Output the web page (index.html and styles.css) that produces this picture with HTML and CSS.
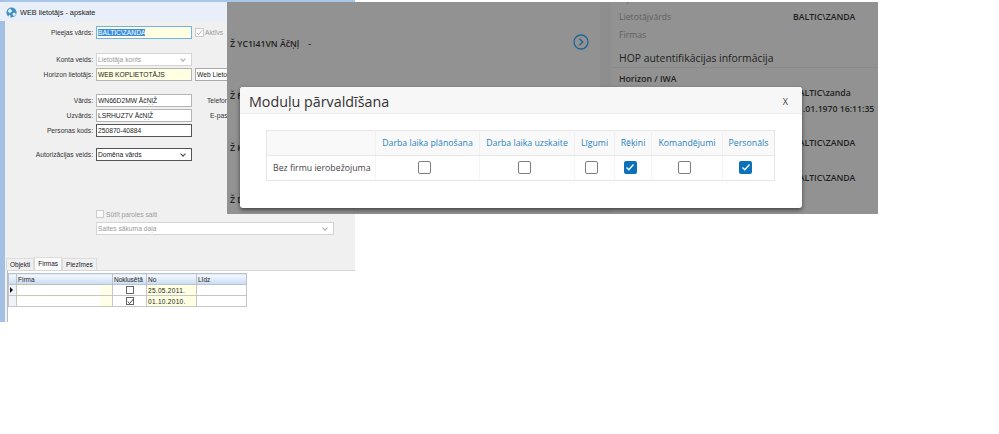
FILE: index.html
```html
<!DOCTYPE html>
<html lang="lv">
<head>
<meta charset="utf-8">
<title>Moduļu pārvaldīšana</title>
<link rel="stylesheet" href="styles.css">
</head>
<body>
<div class="canvas">
  <section class="legacy">
    <header class="legacy-title">
      <svg class="globe" width="11" height="11" viewBox="0 0 14 14"><circle cx="7" cy="7" r="6.500" fill="#3f8fc4"/><path d="M2 5l3-3 3 3-3 3zM8 9l2-2 3 2-3 3zM4 10l2 1-1 2-2-1z" fill="#e8f2f8"/></svg>
      <span>WEB lietotājs - apskate</span>
    </header>
    <div class="form">
      <div class="row r-login"><label>Pieejas vārds:</label><div class="field wide yellow focus"><mark>BALTIC\ZANDA</mark></div><span class="check-mini on"><svg width="8" height="8" viewBox="0 0 8 8"><path d="M1 4l2 2 4-5" fill="none" stroke="#b5b5b5" stroke-width="1.100"/></svg></span><span class="muted">Aktīvs</span></div>
      <div class="row r-type"><label>Konta veids:</label><div class="field wide disabled">Lietotāja konts<i class="chev"></i></div></div>
      <div class="row r-horizon"><label>Horizon lietotājs:</label><div class="field wide yellow">WEB KOPLIETOTĀJS</div><div class="field webuser">Web Lietotājs</div></div>
      <div class="row r-name"><label>Vārds:</label><div class="field wide">WN66D2MW ĀčŅļŽ</div><span class="side">Telefons:</span></div>
      <div class="row r-next"><label>Uzvārds:</label><div class="field wide">LSRHUZ7V ĀčŅļŽ</div><span class="side side-mail">E-pasts:</span></div>
      <div class="row r-next"><label>Personas kods:</label><div class="field wide dark">250870-40884</div></div>
      <div class="row r-auth"><label>Autorizācijas veids:</label><div class="field wide dark">Domēna vārds<i class="chev dark-chev"></i></div></div>
      <div class="row r-send"><span class="check-mini"></span><span class="muted">Sūtīt paroles saiti</span></div>
      <div class="row r-site"><div class="field long disabled">Saites sākuma daļa<i class="chev"></i></div></div>
    </div>
    <nav class="tabs"><span class="tab">Objekti</span><span class="tab active">Firmas</span><span class="tab">Piezīmes</span></nav>
    <div class="gridbox">
      <table class="grid">
        <thead><tr><th class="ind"></th><th class="c-firm">Firma</th><th class="c-def">Noklusētā</th><th class="c-from">No</th><th class="c-to">Līdz</th></tr></thead>
        <tbody>
          <tr><td class="ind"><i class="pointer"></i></td><td class="firm"><b class="redact"></b></td><td class="center"><span class="grid-check"></span></td><td class="date">25.05.2011.</td><td></td></tr>
          <tr><td class="ind"></td><td class="firm"><b class="redact"></b></td><td class="center"><span class="grid-check"><svg width="9" height="9" viewBox="0 0 11 11"><path d="M2 5.500l2.500 2.500L9 2.500" fill="none" stroke="#444" stroke-width="1.200"/></svg></span></td><td class="date">01.10.2010.</td><td></td></tr>
        </tbody>
      </table>
    </div>
  </section>

  <section class="portal">
    <div class="portal-left">
      <div class="entry first"><span class="entry-name">Ž YC1I41VN ĀčŅļ</span><span class="dash">-</span>
        <svg class="next" width="16" height="16" viewBox="0 0 16 16"><circle cx="8" cy="8" r="7" fill="none" stroke="#1f6796" stroke-width="1.300"/><path d="M6.500 4.800L9.700 8l-3.200 3.200" fill="none" stroke="#1f6796" stroke-width="1.500"/></svg>
      </div>
      <div class="entry"><span class="entry-name">Ž F</span></div>
      <div class="entry"><span class="entry-name">Ž K</span></div>
      <div class="entry"><span class="entry-name">Ž D</span></div>
    </div>
    <div class="portal-right">
      <div class="info clipped"><span class="info-label">E-pasts</span></div>
      <div class="info"><span class="info-label">Lietotājvārds</span><strong>BALTIC\ZANDA</strong></div>
      <div class="info"><span class="info-label">Firmas</span></div>
      <h2>HOP autentifikācijas informācija</h2>
      <h3>Horizon / IWA</h3>
      <div class="info tight"><span class="info-label"></span><strong>BALTIC\zanda</strong></div>
      <div class="info tight"><span class="info-label"></span><strong>01.01.1970 16:11:35</strong></div>
      <div class="info tight gap1"><span class="info-label"></span><strong>BALTIC\ZANDA</strong></div>
      <div class="info tight gap2"><span class="info-label"></span><strong>BALTIC\ZANDA</strong></div>
    </div>
  </section>

  <section class="modal">
    <header class="modal-head"><h1>Moduļu pārvaldīšana</h1><span class="close">X</span></header>
    <div class="modal-body">
      <table class="modules">
        <thead><tr><th class="m0"></th><th class="m1">Darba laika plānošana</th><th class="m2">Darba laika uzskaite</th><th class="m3">Līgumi</th><th class="m4">Rēķini</th><th class="m5">Komandējumi</th><th class="m6">Personāls</th></tr></thead>
        <tbody><tr>
          <td class="rowname">Bez firmu ierobežojuma</td>
          <td><span class="cb"></span></td>
          <td><span class="cb"></span></td>
          <td><span class="cb"></span></td>
          <td><span class="cb on"><svg width="12" height="12" viewBox="0 0 12 12"><path d="M2.500 6.500l2.300 2.200L9.500 3.500" fill="none" stroke="#fff" stroke-width="1.300"/></svg></span></td>
          <td><span class="cb"></span></td>
          <td><span class="cb on"><svg width="12" height="12" viewBox="0 0 12 12"><path d="M2.500 6.500l2.300 2.200L9.500 3.500" fill="none" stroke="#fff" stroke-width="1.300"/></svg></span></td>
        </tr></tbody>
      </table>
    </div>
  </section>
</div>
</body>
</html>
```
FILE: styles.css
```css
* { box-sizing: border-box; }
html, body { margin: 0; height: 100%; background: #fff; }
.canvas { position: relative; width: 999px; height: 434px; overflow: hidden; }

/* legacy desktop window */
.legacy {
  position: absolute; left: 0; top: 0; width: 355px; height: 322px;
  background: #f0f0f0; border-left: 5px solid #a3c0e4; border-top: 2px solid #a8c6e8;
  font: 6.700px "Liberation Sans", Arial, sans-serif; color: #222;
}
.legacy-title { display: flex; align-items: center; gap: 3px; height: 19px; margin-left: -5px; padding: 2px 0 0 6px; background: #e8eff8; font-size: 7.300px; color: #222; }
.form { display: flex; flex-direction: column; padding-left: 1px; }
.row { display: flex; align-items: center; height: 13px; }
.row label { width: 90px; padding-right: 3px; text-align: right; color: #333; }
.r-login { margin-top: 5px; }
.r-type { margin-top: 14px; }
.r-horizon { margin-top: 2px; }
.r-name { margin-top: 13px; }
.r-next { margin-top: 2px; }
.r-auth { margin-top: 11px; }
.r-send { margin-top: 47px; padding-left: 90px; gap: 2px; height: 12px; }
.r-site { margin-top: 2px; padding-left: 90px; }
.field { position: relative; height: 13px; padding: 0 1px; line-height: 11px; background: #fff; border: 1px solid #b4b4b4; white-space: nowrap; }
.wide { width: 96px; }
.long { width: 238px; }
.yellow { background: #ffffe1; }
.focus { border-color: #6fb2e8; }
.dark { border-color: #555; }
.disabled { color: #9a9a9a; border-color: #d4d4d4; }
.field mark { background: #3a8edb; color: #fff; }
.webuser { width: 40px; margin-left: 3px; overflow: hidden; background: #fdfdfd; border-color: #aaa; }
.chev { position: absolute; right: 6px; top: 3px; width: 4px; height: 4px; border-right: 1px solid #aaa; border-bottom: 1px solid #aaa; transform: rotate(45deg); }
.dark-chev { border-color: #444; }
.check-mini { display: inline-flex; width: 9px; height: 9px; margin-left: 3px; background: #fbfbfb; border: 1px solid #ccc; }
.r-login .muted { margin-left: 1px; }
.r-send .check-mini { margin-left: 0; width: 8px; height: 8px; }
.muted { color: #9b9b9b; }
.side { margin-left: 15px; color: #333; }
.side-mail { margin-left: 18px; }

.tabs { position: absolute; left: 1px; top: 256px; display: flex; height: 12px; }
.tab { padding: 2px 3px 0; border: 1px solid #dcdcdc; border-bottom: 0; background: #f0f0f0; font-size: 6.500px; }
.tab.active { position: relative; top: -1px; height: 13px; background: #fbfbfb; }
.gridbox { position: absolute; left: 2px; right: 0; top: 268px; bottom: 0; background: #fff; border-top: 1px solid #d6d6d6; padding: 2px 0 0; border-left: 1px solid #bbb; }
.grid { border-collapse: collapse; table-layout: fixed; width: 238px; font-size: 6.500px; }
.grid th { height: 11px; padding: 0 1px; text-align: left; font-weight: 400; background: linear-gradient(#f7faff, #c9dbf3); border: 1px solid #b9c2cd; white-space: nowrap; }
.grid td { height: 11px; padding: 0 1px; background: #fff; border: 1px solid #c6c6c6; }
.ind { width: 8px; }
.grid td.ind { background: #eef3fb; position: relative; }
.c-firm { width: 96px; }
.c-def { width: 34px; }
.c-from { width: 50px; }
.c-to { width: 50px; }
.pointer { position: absolute; left: 1px; top: 2px; border-left: 3px solid #111; border-top: 3px solid transparent; border-bottom: 3px solid transparent; }
.grid td.firm { background: #ffffe8; padding-right: 12px; }
.grid td.date { background: #ffffe1; letter-spacing: 0.300px; }
.redact { display: block; height: 9px; background: #fff; }
.center { text-align: center; }
.grid-check { display: inline-block; width: 8px; height: 8px; vertical-align: middle; background: #fff; border: 1px solid #666; }
.grid-check svg { display: block; margin: -1px; }

/* dimmed web page */
.portal {
  position: absolute; left: 227px; top: 2px; width: 651px; height: 212px;
  display: flex; overflow: hidden; background: #929292;
  font: 8.700px "Open Sans", sans-serif; color: #222;
}
.portal-left { width: 373px; padding-left: 3px; display: flex; flex-direction: column; }
.entry { display: flex; height: 52px; align-items: center; font-weight: 600; font-size: 8.700px; position: relative; flex: none; }
.first { margin-top: 16px; }
.dash { margin-left: 9px; }
.next { position: absolute; left: 343px; top: 16px; }
.portal-right { flex: 1; padding-left: 8px; border-left: 11px solid #8e8e8e; }
.info { display: flex; height: 18px; align-items: center; }
.clipped { height: 3px; margin-bottom: 3px; align-items: flex-end; overflow: hidden; }
.info-label { flex: none; width: 174px; color: #5f5f5f; }
.info strong { font-weight: 600; color: #222; white-space: nowrap; }
.tight { height: 16px; }
.gap1 { margin-top: 18px; }
.gap2 { margin-top: 19px; }
.portal-right h2 { margin: 5px 0 0 -8px; padding-left: 8px; height: 19px; font-size: 10.400px; line-height: 18px; font-weight: 400; color: #222; white-space: nowrap; border-bottom: 1px solid #8a8a8a; }
.portal-right h3 { margin: 5px 0 0; height: 12px; line-height: 12px; font-size: 8.700px; font-weight: 600; }

/* modal */
.modal { position: absolute; left: 240px; top: 87px; width: 562px; height: 121px; background: #fff; border-radius: 3px; box-shadow: 0 2px 4px rgba(0,0,0,.55); font-family: "Open Sans", sans-serif; }
.modal-head { display: flex; align-items: center; justify-content: space-between; height: 27px; padding: 2px 14px 0 9px; background: #f7f7f7; border-bottom: 1px solid #ececec; border-radius: 3px 3px 0 0; }
.modal-head h1 { margin: 0; font-size: 14.300px; font-weight: 400; color: #333; }
.close { font-size: 9px; color: #444; }
.modal-body { padding: 16px 26px 0; }
.modules { border-collapse: collapse; table-layout: fixed; width: 508px; font-size: 8.750px; }
.modules th { height: 25px; padding: 0; background: #f9f9f9; border: 1px solid #e6e6e6; border-left-color: #f1f1f1; border-right-color: #f1f1f1; font-weight: 400; color: #2a83bd; white-space: nowrap; text-align: center; }
.modules td { height: 25px; padding: 0; border: 1px solid #e6e6e6; border-left-color: #f4f4f4; border-right-color: #f4f4f4; text-align: center; }
.modules th:first-child { border-left-color: #e6e6e6; }
.modules th:last-child { border-right-color: #e6e6e6; }
.modules td.rowname { text-align: left; padding-left: 6px; color: #444; white-space: nowrap; border-left-color: #e6e6e6; }
.modules td:last-child { border-right-color: #e6e6e6; }
.m0 { width: 109px; }
.m1 { width: 104px; }
.m2 { width: 95px; }
.m3 { width: 40px; }
.m4 { width: 37px; }
.m5 { width: 71px; }
.m6 { width: 52px; }
.cb { display: inline-block; width: 13px; height: 13px; margin: 0 6px 2px 0; vertical-align: middle; background: #fff; border: 1.500px solid #7f7f7f; border-radius: 2px; }
.cb.on { display: inline-flex; align-items: center; justify-content: center; background: #0b72b9; border: 0; }
```
